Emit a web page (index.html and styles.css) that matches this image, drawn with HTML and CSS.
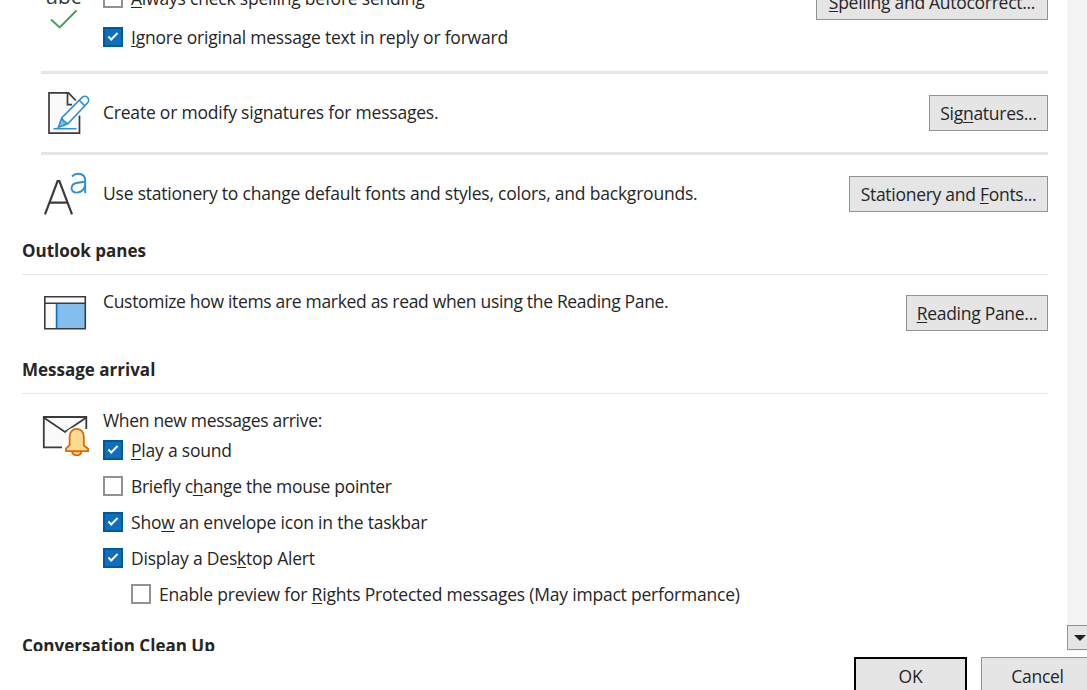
FILE: index.html
```
<!DOCTYPE html>
<html lang="en">
<head>
    <meta charset="UTF-8">
    <title>Outlook Options</title>
    <link rel="stylesheet" href="styles.css">
</head>
<body>

    <div class="viewport">
        <main class="options">
            <section class="row spelling">
                <div class="icon abc">
                    <span>abc</span>
                    <svg width="28" height="20" viewBox="0 0 28 20" fill="none" stroke="#3da450" stroke-width="1.9"><path d="M1 10.5l8.7 8L26.5 1.5"/></svg>
                </div>
                <div class="checks">
                    <label class="check"><span class="box"></span><span><u>A</u>lways check spelling before sending</span></label>
                    <label class="check"><span class="box on"></span><span><u>I</u>gnore original message text in reply or forward</span></label>
                </div>
                <button class="w232"><span><u>S</u>pelling and Autocorrect...</span></button>
            </section>

            <section class="row ruled">
                <div class="icon">
                    <svg width="50" height="46" viewBox="0 0 50 46" fill="none">
                        <path d="M8 2.8h19.5L39 14v29.2H8z" fill="#fafafa"/>
                        <path d="M34.8 10.5L27.5 2.8H8v40.4h30.5V25.5" stroke="#3b3b3b" stroke-width="1.7"/>
                        <path d="M26.5 3v11.6h4.5" stroke="#3b3b3b" stroke-width="1.7"/>
                        <path d="M41 7L22 26l-6 12 11-4 21-21z" fill="#fff"/>
                        <path d="M17.5 37.3l3.4-9.5 7.2 6z" fill="#83beec"/>
                        <path d="M17.3 37.4l3.5-9.7L40.9 7.6a3.6 3.6 0 0 1 5.8 5.1L26.8 33.7zM20.8 27.7c1.3 3.8 3 5.3 6 6M38.2 10.3l5.6 5.6" stroke="#2b90d4" stroke-width="1.6"/>
                        <path d="M12.5 38.7h23" stroke="#2b90d4" stroke-width="1.5"/>
                    </svg>
                </div>
                <p>Create or modify signatures for messages.</p>
                <button class="w119"><span>Sig<u>n</u>atures...</span></button>
            </section>

            <section class="row ruled">
                <div class="icon">
                    <svg width="50" height="46" viewBox="0 0 50 46" fill="none">
                        <path d="M4 43.3L16.6 10.2h1.8L31 43.3M8.9 31.7h17.5" stroke="#3b3b3b" stroke-width="2.2"/>
                        <path d="M31 5.5c3.800-4 13.200-4 13.200 4v12.800M44.200 10.800l-7.500 1c-8.200 1.200-7.800 9.800-1.200 9.800 5.200 0 8.700-4 8.700-9" stroke="#2b90d4" stroke-width="1.9"/>
                    </svg>
                </div>
                <p>Use stationery to change default fonts and styles, colors, and backgrounds.</p>
                <button class="w199"><span>Stationery and <u>F</u>onts...</span></button>
            </section>

            <h2 class="h-panes">Outlook panes</h2>
            <section class="row panes">
                <div class="icon">
                    <svg width="50" height="46" viewBox="0 0 50 46" fill="none">
                        <path d="M4.8 6.8h40.5v32H4.8z" fill="#fafafa"/>
                        <path d="M17 13.5h28v25H17z" fill="#83beec"/>
                        <path d="M16.6 13.5v25" stroke="#0c70c6" stroke-width="1.7"/>
                        <path d="M4.8 6.8h40.5v32H4.8zM4 13.2h42" stroke="#3b3b3b" stroke-width="1.6"/>
                    </svg>
                </div>
                <p class="tight">Customize how items are marked as read when using the Reading Pane.</p>
                <button class="w142"><span><u>R</u>eading Pane...</span></button>
            </section>

            <h2>Message arrival</h2>
            <section class="row arrival">
                <div class="icon">
                    <svg width="50" height="50" viewBox="0 0 50 50" fill="none">
                        <path d="M3.8 8h42.5v30.4H3.8z" fill="#fafafa"/>
                        <path d="M22 38.4H3.8V8h42.5v12M4 8.7L25 23 46 8.7" stroke="#3b3b3b" stroke-width="1.8"/>
                        <path d="M22 41v-7l4-4v-5c2-9 20-9 22-1l2 10v8z" fill="#fff"/>
                        <path d="M32 42.5c.8 5 8.7 5 9.5 0z" fill="#f9dc8f" stroke="#db6a00" stroke-width="1.7"/>
                        <path d="M26 42.2v-2.5l3.6-3.5v-8.500c0-10.500 14.200-10.500 14.200 0v8.500l4.300 3.500v2.500z" fill="#f9dc8f" stroke="#db6a00" stroke-width="1.8"/>
                    </svg>
                </div>
                <div class="checks">
                    <p class="tight">When new messages arrive:</p>
                    <label class="check"><span class="box on"></span><span><u>P</u>lay a sound</span></label>
                    <label class="check"><span class="box"></span><span class="tight">Briefly c<u>h</u>ange the mouse pointer</span></label>
                    <label class="check"><span class="box on"></span><span>Sho<u>w</u> an envelope icon in the taskbar</span></label>
                    <label class="check"><span class="box on"></span><span>Display a Des<u>k</u>top Alert</span></label>
                    <label class="check indent"><span class="box"></span><span>Enable preview for <u>R</u>ights Protected messages (May impact performance)</span></label>
                </div>
            </section>

            <h2>Conversation Clean Up</h2>
        </main>

        <div class="scrollbar">
            <div class="scroll-down">
                <svg width="12" height="6" viewBox="0 0 12 6"><path d="M0 0h12L6 6z" fill="#222"/></svg>
            </div>
        </div>
    </div>

    <footer class="actions">
        <button class="ok">OK</button>
        <button class="cancel">Cancel</button>
    </footer>

</body>
</html>
```
FILE: styles.css
```
* {
    box-sizing: border-box;
}
body {
    margin: 0;
    height: 690px;
    overflow: hidden;
    background-color: #fff;
    color: #262626;
    font-family: "Open Sans", "Noto Sans", sans-serif;
    font-size: 17.5px;
    line-height: 24px;
    letter-spacing: -0.21px;
}
.viewport {
    display: flex;
    width: 1092px;
    height: 651px;
    overflow: hidden;
}
.options {
    flex: none;
    width: 1067px;
    padding: 0 19px 0 22px;
}
p, h2 {
    margin: 0;
}
p {
    flex: 1;
    white-space: nowrap;
}
.tight {
    letter-spacing: -0.32px;
}
u {
    text-decoration-thickness: 1px;
    text-underline-offset: 2px;
    text-decoration-skip-ink: none;
}
.row {
    display: flex;
    align-items: flex-start;
}
.icon {
    flex: none;
    width: 62px;
    height: 46px;
}
.icon svg {
    display: block;
}
.ruled, .spelling {
    margin-left: 19px;
}
.ruled {
    height: 81px;
    padding-top: 18px;
    border-top: 3px solid #e5e5e5;
}
.ruled .icon {
    margin-top: -2px;
}
.ruled p {
    padding-top: 8px;
}
.ruled button {
    margin-top: 3px;
}
.spelling {
    height: 87px;
    margin-top: -16px;
}
.abc {
    display: flex;
    flex-direction: column;
    padding-left: 5px;
    font-size: 21.5px;
    color: #3b3b3b;
}
.abc svg {
    margin: 1px 0 0 4px;
}
.checks {
    flex: 1;
}
.spelling .checks {
    margin-top: -6px;
}
.spelling .check {
    height: 39px;
}
.check {
    display: flex;
    align-items: center;
    gap: 8px;
    height: 36px;
    white-space: nowrap;
}
.indent {
    margin-left: 28px;
}
.box {
    display: flex;
    align-items: center;
    justify-content: center;
    width: 20px;
    height: 20px;
    border: 2px solid #929292;
    background-color: #fff;
}
.box.on {
    border-color: #005a9e;
    background-color: #106ebe;
}
.box.on::after {
    content: "";
    width: 8px;
    height: 3px;
    margin-top: -3px;
    border-left: 2px solid #fff;
    border-bottom: 2px solid #fff;
    transform: rotate(-45deg);
}
button {
    flex: none;
    height: 36px;
    padding: 0;
    border: 1px solid #929292;
    background-color: #e5e5e5;
    color: #262626;
    font: inherit;
    letter-spacing: -0.28px;
    white-space: nowrap;
}
.w232 { width: 232px; }
.w199 { width: 199px; }
.w142 { width: 142px; }
.w119 { width: 119px; }
h2 {
    height: 36px;
    border-bottom: 1px solid #e5e5e5;
    font-size: 17px;
    line-height: 24px;
    letter-spacing: 0;
}
.h-panes {
    margin-top: 6px;
}
.panes, .arrival {
    padding-left: 18px;
}
.panes {
    height: 83px;
    padding-top: 15px;
}
.panes p, .arrival p {
    margin-top: -1px;
}
.panes .icon, .arrival .icon {
    width: 63px;
}
.panes button {
    margin-top: 5px;
}
.arrival {
    height: 240px;
    padding-top: 15px;
}
.scrollbar {
    display: flex;
    flex-direction: column;
    justify-content: flex-end;
    width: 25px;
    height: 651px;
    padding-bottom: 1px;
    background-color: #f3f3f3;
}
.scroll-down {
    display: flex;
    align-items: center;
    justify-content: center;
    height: 25px;
    border: 1px solid #929292;
    background-color: #e5e5e5;
}
.actions {
    display: flex;
    gap: 14px;
    padding: 6px 0 0 854px;
}
.actions button {
    width: 113px;
    height: 37px;
}
.actions .ok {
    border: 2px solid #000;
}
```
